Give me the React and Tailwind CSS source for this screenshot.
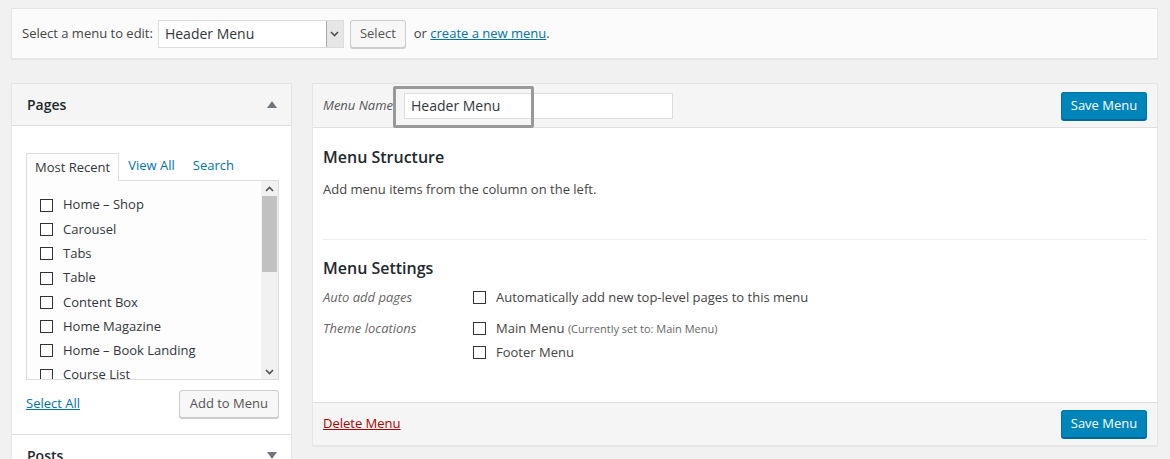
import React from 'react';

const pages = [
  'Home – Shop',
  'Carousel',
  'Tabs',
  'Table',
  'Content Box',
  'Home Magazine',
  'Home – Book Landing',
  'Course List',
];

const Box = () => (
  <span className="inline-block w-[13px] h-[13px] border border-[#333] bg-white shrink-0" />
);

const Triangle = ({ up }) => (
  <svg width="10" height="7" viewBox="0 0 10 7" className="text-[#72777c]">
    {up ? <path d="M5 0 L10 7 L0 7 Z" fill="currentColor" /> : <path d="M0 0 L10 0 L5 7 Z" fill="currentColor" />}
  </svg>
);

const Chevron = ({ up }) => (
  <svg width="9" height="6" viewBox="0 0 9 6">
    <path d={up ? 'M1 5 L4.5 1.5 L8 5' : 'M1 1 L4.5 4.5 L8 1'} stroke="#505050" strokeWidth="1.6" fill="none" />
  </svg>
);

const SaveButton = () => (
  <button className="h-[28px] w-[86px] rounded-[3px] bg-[#0085ba] border border-[#0073aa] border-b-[#006799] shadow-[0_1px_0_#006799] text-white text-[13px]">
    Save Menu
  </button>
);

export default function App() {
  return (
    <div className="min-h-screen bg-[#f1f1f1] pl-[11px] pt-[8px] text-[#444] text-[13px] font-['Open_Sans','Noto_Sans',sans-serif]">
      <div className="w-[1147px]">
        {/* menu picker */}
        <div className="h-[51px] bg-[#fbfbfb] border border-[#e5e5e5] shadow-[0_1px_1px_rgba(0,0,0,0.04)] flex items-center px-[10px]">
          <span className="mr-[5px]">Select a menu to edit:</span>
          <div className="w-[186px] h-[28px] border border-[#ddd] bg-white flex items-center justify-between">
            <span className="pl-[6px] text-[14px] text-[#32373c]">Header Menu</span>
            <span className="w-[17px] h-[26px] bg-[#e6e6e6] border-l border-[#aaa] flex items-center justify-center">
              <Chevron />
            </span>
          </div>
          <button className="ml-[6px] h-[28px] px-[9px] rounded-[3px] bg-[#f7f7f7] border border-[#ccc] shadow-[0_1px_0_#ccc] text-[#555]">
            Select
          </button>
          <span className="ml-[8px]">
            or <a className="text-[#0073aa] underline">create a new menu</a>.
          </span>
        </div>

        <div className="flex gap-[20px] mt-[24px] items-start">
          {/* left column */}
          <div className="w-[281px] bg-white border border-[#e5e5e5] shadow-[0_1px_1px_rgba(0,0,0,0.04)]">
            <div className="h-[42px] bg-[#f5f5f5] border-b border-[#dfdfdf] flex items-center justify-between pl-[15px] pr-[14px]">
              <span className="text-[14px] font-semibold text-[#23282d]">Pages</span>
              <Triangle up />
            </div>
            <div className="pl-[14px] pr-[12px] pt-[26px] pb-[16px]">
              <div className="flex items-end text-[13px]">
                <span className="h-[28px] px-[8px] flex items-center border border-b-0 border-[#ddd] bg-[#fdfdfd] text-[#32373c] relative top-[1px] z-10">
                  Most Recent
                </span>
                <a className="px-[9px] h-[28px] flex items-center text-[#0073aa]">View All</a>
                <a className="px-[9px] h-[28px] flex items-center text-[#0073aa]">Search</a>
              </div>
              <div className="h-[200px] border border-[#ddd] bg-[#fdfdfd] flex overflow-hidden">
                <div className="flex-1 pl-[13px] pt-[12px] overflow-hidden">
                  {pages.map((p) => (
                    <label key={p} className="flex items-center gap-[10px] h-[24.3px] text-[13px] text-[#32373c]">
                      <Box />
                      <span>{p}</span>
                    </label>
                  ))}
                </div>
                <div className="w-[17px] bg-[#f1f1f1] flex flex-col">
                  <div className="h-[15px] flex items-center justify-center"><Chevron up /></div>
                  <div className="h-[76px] bg-[#c1c1c1] mx-[1px]" />
                  <div className="flex-1" />
                  <div className="h-[15px] flex items-center justify-center"><Chevron /></div>
                </div>
              </div>
              <div className="flex items-center justify-between mt-[10px]">
                <a className="text-[#0073aa] underline">Select All</a>
                <button className="h-[28px] px-[10px] rounded-[3px] bg-[#f7f7f7] border border-[#ccc] shadow-[0_1px_0_#ccc] text-[#555]">
                  Add to Menu
                </button>
              </div>
            </div>
            <div className="border-t border-[#dfdfdf] h-[42px] flex items-center justify-between pl-[15px] pr-[14px]">
              <span className="text-[14px] font-semibold text-[#23282d]">Posts</span>
              <Triangle />
            </div>
          </div>

          {/* right panel */}
          <div className="flex-1 bg-white border border-[#e5e5e5] shadow-[0_1px_1px_rgba(0,0,0,0.04)]">
            <div className="relative h-[44px] bg-[#f5f5f5] border-b border-[#dfdfdf] flex items-center justify-between px-[10px]">
              <div className="flex items-center">
                <span className="italic text-[#555] w-[81px]">Menu Name</span>
                <div className="w-[269px] h-[26px] border border-[#ddd] bg-white flex items-center pl-[6px] text-[14px] text-[#32373c]">
                  Header Menu
                </div>
              </div>
              <SaveButton />
              <div className="absolute left-[80px] top-[2px] w-[141px] h-[42px] border-[3px] border-[#999] rounded-[2px]" />
            </div>
            <div className="px-[10px] pt-[17px]">
              <h3 className="text-[16px] font-semibold text-[#23282d]">Menu Structure</h3>
              <p className="mt-[11px]">Add menu items from the column on the left.</p>
              <div className="border-t border-[#eee] mt-[39px]" />
              <h3 className="text-[16px] font-semibold text-[#23282d] mt-[16px]">Menu Settings</h3>
              <div className="flex mt-[8px]">
                <span className="italic text-[#666] w-[150px]">Auto add pages</span>
                <label className="flex items-center gap-[10px]">
                  <Box />
                  <span>Automatically add new top-level pages to this menu</span>
                </label>
              </div>
              <div className="flex mt-[12px] pb-[40px]">
                <span className="italic text-[#666] w-[150px]">Theme locations</span>
                <div className="flex flex-col gap-[4px]">
                  <label className="flex items-center gap-[10px]">
                    <Box />
                    <span>Main Menu <span className="text-[11px] text-[#666]">(Currently set to: Main Menu)</span></span>
                  </label>
                  <label className="flex items-center gap-[10px]">
                    <Box />
                    <span>Footer Menu</span>
                  </label>
                </div>
              </div>
            </div>
            <div className="h-[43px] bg-[#f5f5f5] border-t border-[#dfdfdf] flex items-center justify-between px-[10px]">
              <a className="text-[#a00] underline">Delete Menu</a>
              <SaveButton />
            </div>
          </div>
        </div>
      </div>
    </div>
  );
}
